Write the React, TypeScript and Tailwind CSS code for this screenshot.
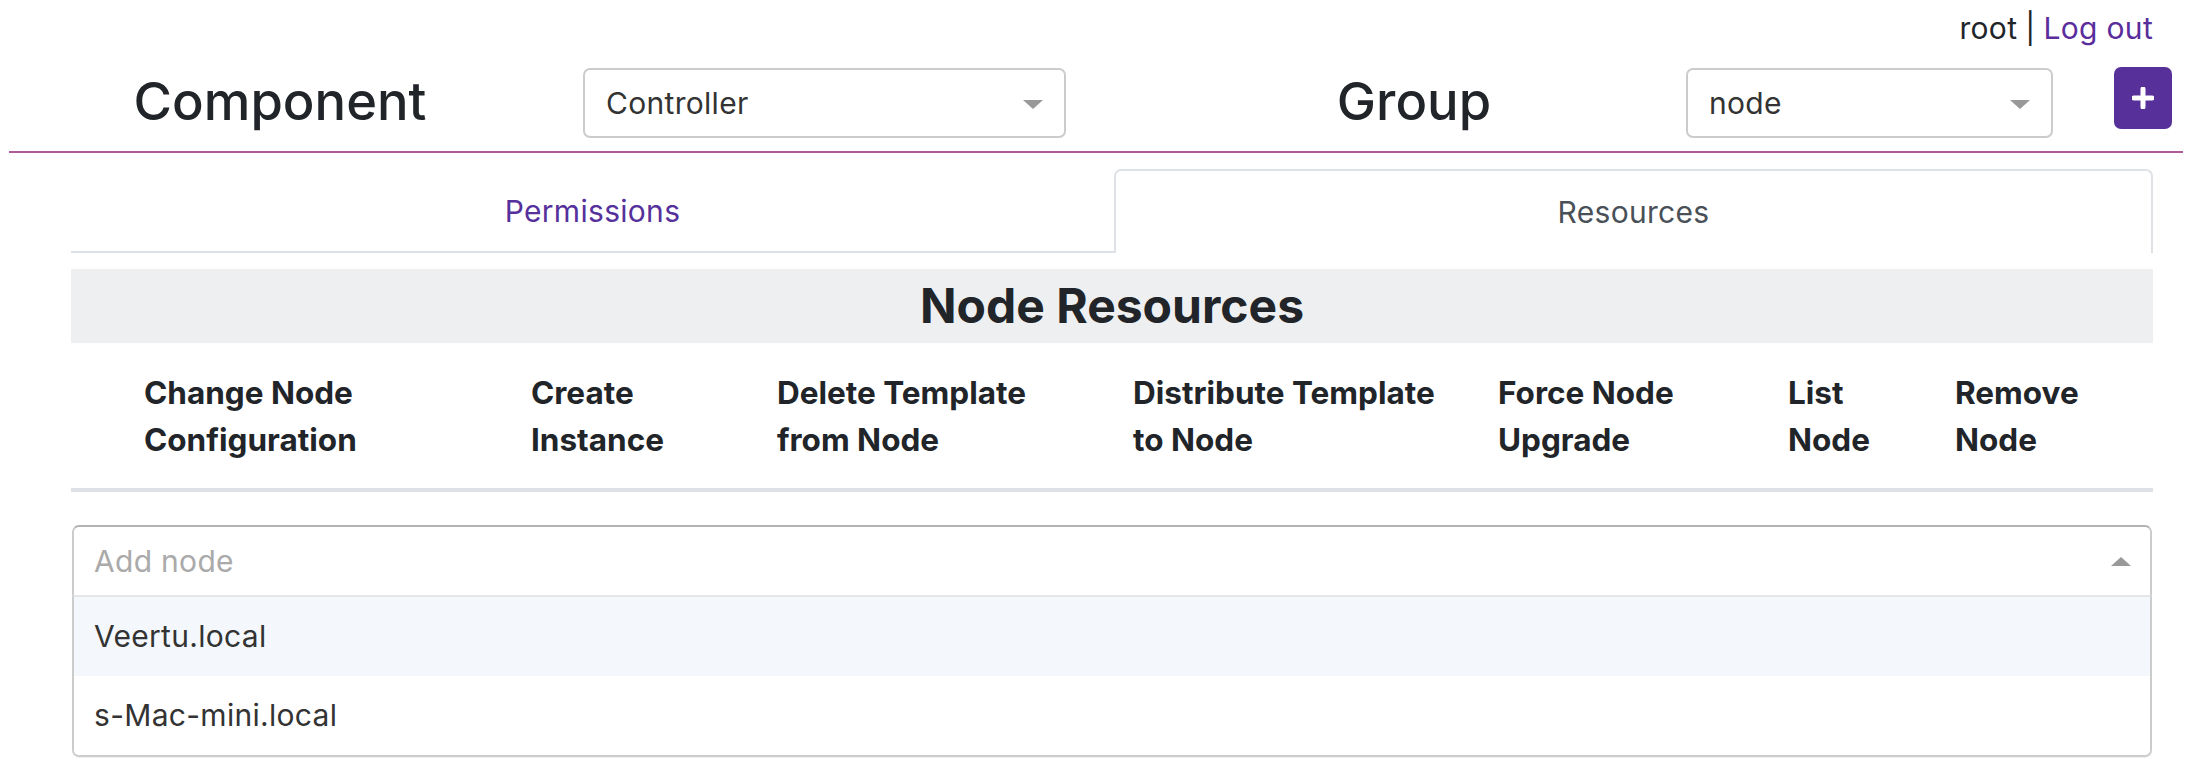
import React from "react";

function SelectBox({ value, width }: { value: string; width: string }) {
  return (
    <div
      className={`${width} h-[70px] border-2 border-[#cccccc] rounded-[7px] bg-white flex items-center pl-[21px] pr-[21px] box-border`}
    >
      <span className="flex-1 text-[30px] tracking-[0.01em] text-[#333333] leading-none">{value}</span>
      <span className="w-0 h-0 border-t-[9px] border-t-[#999999] border-x-[10px] border-x-transparent mt-[2px]" />
    </div>
  );
}

const columns: { lines: string[]; w: string }[] = [
  { lines: ["Change Node", "Configuration"], w: "w-[387px]" },
  { lines: ["Create", "Instance"], w: "w-[246px]" },
  { lines: ["Delete Template", "from Node"], w: "w-[356px]" },
  { lines: ["Distribute Template", "to Node"], w: "w-[365px]" },
  { lines: ["Force Node", "Upgrade"], w: "w-[290px]" },
  { lines: ["List", "Node"], w: "w-[167px]" },
  { lines: ["Remove", "Node"], w: "w-[198px]" },
];

export default function App() {
  return (
    <div className="w-[2192px] h-[783px] overflow-hidden bg-white text-[#212529] font-['Inter',sans-serif]">
      {/* user line */}
      <div className="h-[52px] pt-[7px] pr-[39px] flex justify-end text-[30px] tracking-[0.01em] leading-[42px]">
        <span>root</span>
        <span className="mx-[8px]">|</span>
        <a className="text-[#5a2d9c]">Log out</a>
      </div>

      {/* header row */}
      <div className="mt-[16px] h-[70px] flex items-center">
        <div className="w-[560px] text-center text-[52.5px] font-medium leading-none -mt-[3px]">Component</div>
        <div className="ml-[23px]">
          <SelectBox value="Controller" width="w-[483px]" />
        </div>
        <div className="ml-[76px] w-[544px] text-center text-[52.5px] font-medium leading-none -mt-[3px]">Group</div>
        <SelectBox value="node" width="w-[367px]" />
        <button className="ml-[61px] self-start -mt-[1px] w-[58px] h-[62px] rounded-[7px] bg-[#58309a] flex items-center justify-center">
          <svg width="22" height="22" viewBox="0 0 22 22">
            <path d="M11 2 V20 M2 11 H20" stroke="#ffffff" strokeWidth="5" strokeLinecap="round" />
          </svg>
        </button>
      </div>

      {/* purple divider */}
      <div className="mt-[13px] mx-[9px] h-[2px] bg-[#ad5a9a]" />

      {/* tabs */}
      <div className="mt-[16px] ml-[71px] w-[2082px] flex">
        <div className="w-[1043px] h-[84px] border-t-2 border-t-transparent border-b-2 border-b-[#dee2e6] flex items-center justify-center text-[30px] tracking-[0.01em] text-[#56309b] box-border">
          Permissions
        </div>
        <div className="flex-1 h-[84px] border-2 border-b-0 border-[#dee2e6] rounded-t-[7px] flex items-center justify-center text-[30px] tracking-[0.01em] text-[#495057] box-border">
          Resources
        </div>
      </div>

      {/* section header */}
      <div className="mt-[16px] ml-[71px] w-[2082px] h-[74px] bg-[#eeeff1] flex items-center justify-center text-[48px] font-bold leading-none">
        Node Resources
      </div>

      {/* table header */}
      <div className="ml-[71px] w-[2082px] flex pl-[73px] pt-[26px] pb-[25px] border-b-4 border-[#dee2e6]">
        {columns.map((c) => (
          <div key={c.lines[0]} className={`${c.w} shrink-0 text-[31.5px] font-bold leading-[47px]`}>
            <div>{c.lines[0]}</div>
            <div>{c.lines[1]}</div>
          </div>
        ))}
      </div>

      {/* select with open menu */}
      <div className="mt-[33px] ml-[72px] w-[2080px]">
        <div className="h-[70px] border-2 border-[#b3b3b3] border-x-[#cccccc] border-b-0 rounded-t-[7px] flex items-center pl-[20px] pr-[19px] bg-white">
          <span className="flex-1 text-[30px] tracking-[0.01em] text-[#aaaaaa]">Add node</span>
          <span className="w-0 h-0 border-b-[9px] border-b-[#999999] border-x-[10px] border-x-transparent" />
        </div>
        <div className="border-2 border-t-2 border-[#cccccc] border-t-[#e6e6e6] rounded-b-[7px] overflow-hidden shadow-[0_1px_0_rgba(0,0,0,0.06)]">
          <div className="h-[79px] bg-[#f4f8fd] flex items-center pl-[20px] text-[30px] tracking-[0.01em] text-[#333333]">Veertu.local</div>
          <div className="h-[79px] bg-white flex items-center pl-[20px] text-[30px] tracking-[0.01em] text-[#333333]">s-Mac-mini.local</div>
        </div>
      </div>
    </div>
  );
}
